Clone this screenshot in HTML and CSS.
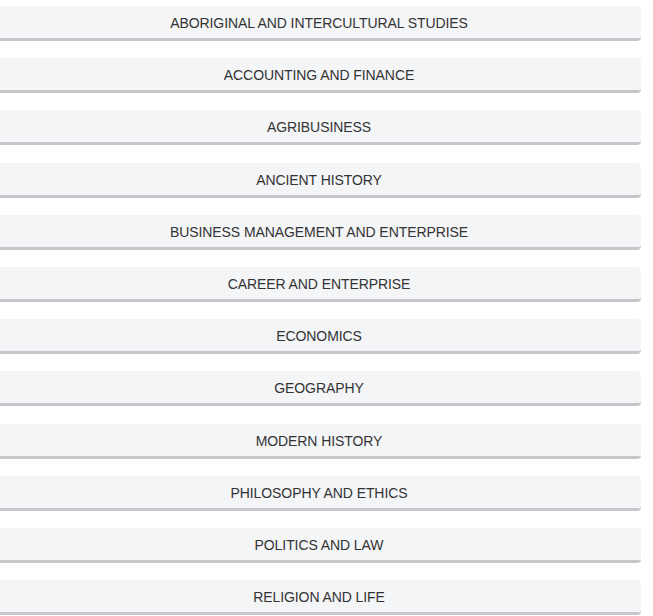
FILE: index.html
```html
<!DOCTYPE html>
<html lang="en">
<head>
  <meta charset="UTF-8" />
  <meta name="viewport" content="width=device-width, initial-scale=1.0"/>
  <title>Subjects</title>
  <link rel="stylesheet" href="styles.css">
</head>
<body>
  <div class="subject-list">
    <a href="#" class="subject">Aboriginal and Intercultural Studies</a>
    <a href="#" class="subject">Accounting and Finance</a>
    <a href="#" class="subject">Agribusiness</a>
    <a href="#" class="subject">Ancient History</a>
    <a href="#" class="subject">Business Management and Enterprise</a>
    <a href="#" class="subject">Career and Enterprise</a>
    <a href="#" class="subject">Economics</a>
    <a href="#" class="subject">Geography</a>
    <a href="#" class="subject">Modern History</a>
    <a href="#" class="subject">Philosophy and Ethics</a>
    <a href="#" class="subject">Politics and Law</a>
    <a href="#" class="subject">Religion and Life</a>
  </div>
</body>
</html>
```

FILE: styles.css
```css
* {
  box-sizing: border-box;
}

body {
  margin: 0;
  font-family: "Liberation Sans", Arial, sans-serif;
  background: #fff;
  color: #333;
}

.subject-list {
  display: flex;
  flex-direction: column;
  gap: 17.2px;
  width: 641px;
  padding-top: 6px;
}

.subject {
  display: block;
  height: 35px;
  padding: 1px 3px 0 0;
  line-height: 32px;
  text-align: center;
  font-size: 14px;
  letter-spacing: -0.08px;
  text-transform: uppercase;
  text-decoration: none;
  color: #333;
  background: #f4f5f7;
  border-bottom: 3px solid #c5c7ca;
  border-radius: 0 4px 4px 0;
}

.subject:hover {
  background: #eaecef;
}
```
